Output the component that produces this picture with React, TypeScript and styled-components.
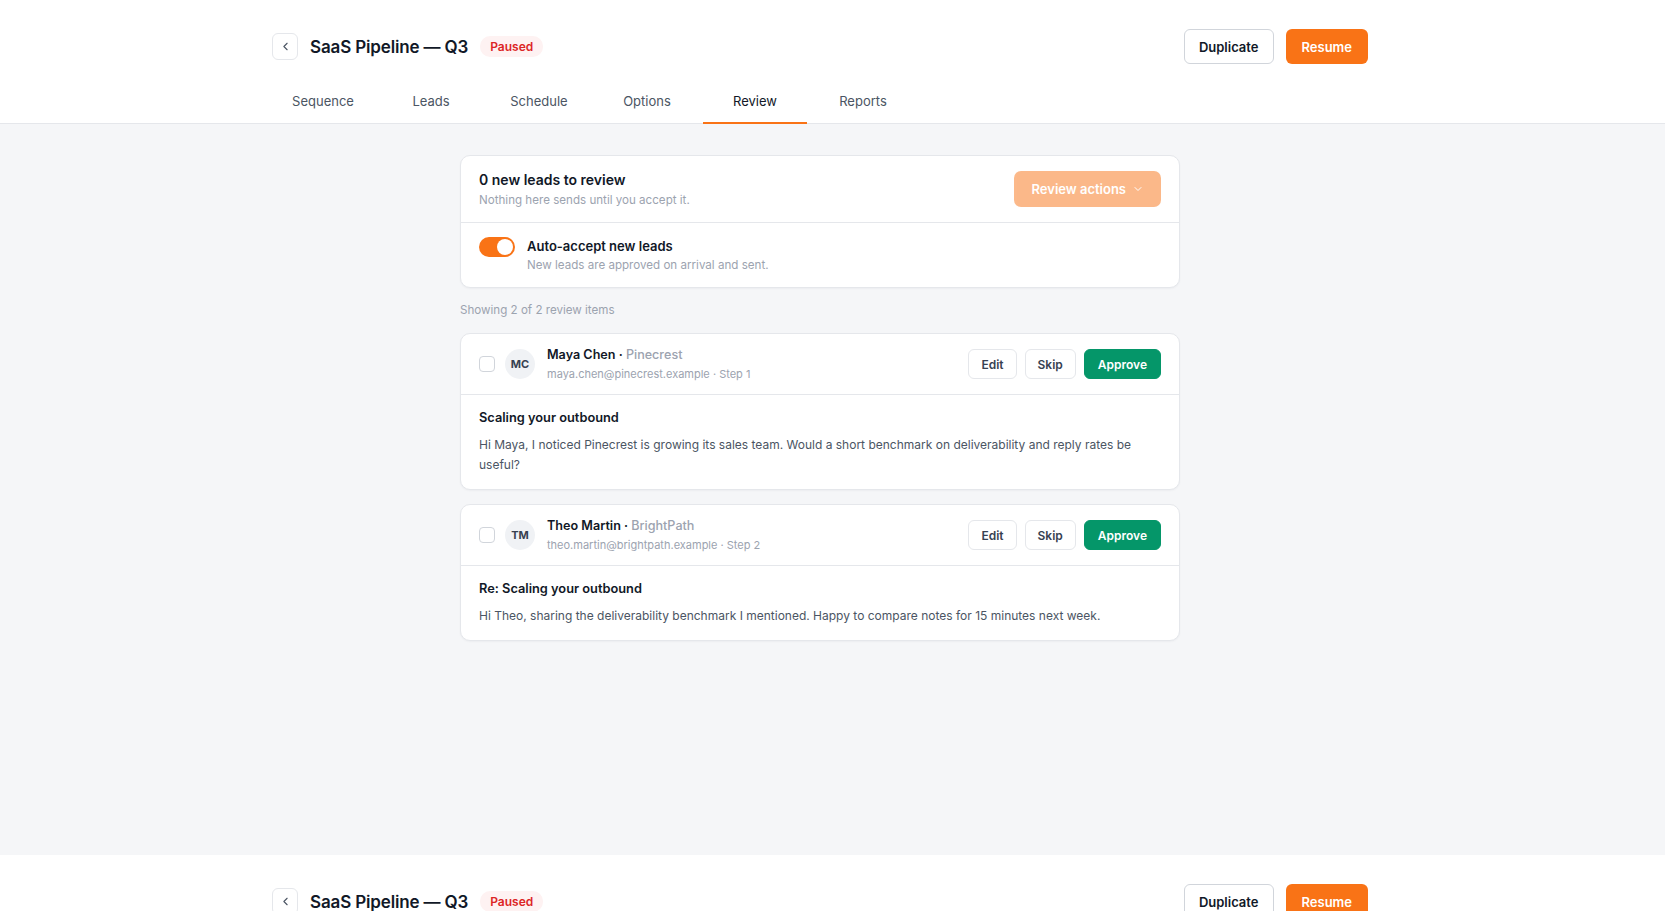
import React from "react"
import styled, { createGlobalStyle } from "styled-components"
import { ChevronLeft, ChevronDown } from "lucide-react"

const GlobalStyle = createGlobalStyle`
  * {
    box-sizing: border-box;
  }
  body {
    margin: 0;
    background: #ffffff;
    font-family: Inter, "Noto Sans", sans-serif;
    color: #111827;
    -webkit-font-smoothing: antialiased;
  }
`

type Item = {
  initials: string
  name: string
  company: string
  email: string
  step: number
  subject: string
  body: string
}

const items: Item[] = [
  {
    initials: "MC",
    name: "Maya Chen",
    company: "Pinecrest",
    email: "maya.chen@pinecrest.example",
    step: 1,
    subject: "Scaling your outbound",
    body: "Hi Maya, I noticed Pinecrest is growing its sales team. Would a short benchmark on deliverability and reply rates be useful?",
  },
  {
    initials: "TM",
    name: "Theo Martin",
    company: "BrightPath",
    email: "theo.martin@brightpath.example",
    step: 2,
    subject: "Re: Scaling your outbound",
    body: "Hi Theo, sharing the deliverability benchmark I mentioned. Happy to compare notes for 15 minutes next week.",
  },
]

const tabs = ["Sequence", "Leads", "Schedule", "Options", "Review", "Reports"]

const ReviewCard = ({ item }: { item: Item }) => (
  <Card>
    <LeadRow>
      <Checkbox />
      <Avatar>{item.initials}</Avatar>
      <LeadInfo>
        <LeadName>
          {item.name} · <Company>{item.company}</Company>
        </LeadName>
        <LeadMeta>
          {item.email} · Step {item.step}
        </LeadMeta>
      </LeadInfo>
      <RowActions>
        <SmallButton>Edit</SmallButton>
        <SmallButton>Skip</SmallButton>
        <SmallButton $approve>Approve</SmallButton>
      </RowActions>
    </LeadRow>
    <MessageBody>
      <Subject>{item.subject}</Subject>
      <BodyText>{item.body}</BodyText>
    </MessageBody>
  </Card>
)

const Screen = () => (
  <ScreenWrapper>
    <TopBar>
      <Inner>
        <HeaderRow>
          <TitleGroup>
            <BackButton>
              <ChevronLeft size={13} strokeWidth={2} />
            </BackButton>
            <Title>SaaS Pipeline — Q3</Title>
            <Badge>Paused</Badge>
          </TitleGroup>
          <HeaderActions>
            <OutlineButton>Duplicate</OutlineButton>
            <PrimaryButton>Resume</PrimaryButton>
          </HeaderActions>
        </HeaderRow>
        <TabBar>
          {tabs.map((t) => (
            <Tab key={t} $active={t === "Review"}>
              {t}
            </Tab>
          ))}
        </TabBar>
      </Inner>
    </TopBar>
    <Main>
      <Column>
        <Card>
          <SummaryRow>
            <div>
              <SummaryTitle>0 new leads to review</SummaryTitle>
              <Muted>Nothing here sends until you accept it.</Muted>
            </div>
            <ActionsButton disabled>
              Review actions
              <ChevronDown size={12} strokeWidth={2} />
            </ActionsButton>
          </SummaryRow>
          <ToggleRow>
            <Toggle $on />
            <div>
              <ToggleLabel>Auto-accept new leads</ToggleLabel>
              <Muted>New leads are approved on arrival and sent.</Muted>
            </div>
          </ToggleRow>
        </Card>
        <CountLine>Showing 2 of 2 review items</CountLine>
        <CardList>
          {items.map((item) => (
            <ReviewCard key={item.email} item={item} />
          ))}
        </CardList>
      </Column>
    </Main>
  </ScreenWrapper>
)

const App = () => (
  <>
    <GlobalStyle />
    <Screen />
    <Screen />
  </>
)

export default App

const ScreenWrapper = styled.div`
  display: flex;
  flex-direction: column;
  min-height: calc(100vh - 56px);
`
const TopBar = styled.header`
  background: #ffffff;
  border-bottom: 1px solid #e5e7eb;
  padding-right: 25px;
`
const Inner = styled.div`
  max-width: 1096px;
  margin: 0 auto;
`
const HeaderRow = styled.div`
  display: flex;
  align-items: center;
  justify-content: space-between;
  padding-top: 29px;
  height: 64px;
`
const TitleGroup = styled.div`
  display: flex;
  align-items: center;
  gap: 12px;
`
const BackButton = styled.button`
  display: grid;
  place-items: center;
  width: 26px;
  height: 27px;
  padding: 0;
  background: #ffffff;
  border: 1px solid #e5e7eb;
  border-radius: 6px;
  color: #4b5563;
`
const Title = styled.h1`
  margin: 0;
  font-size: 17px;
  font-weight: 600;
  line-height: 24px;
  letter-spacing: -0.15px;
  color: #111827;
`
const Badge = styled.span`
  display: inline-flex;
  align-items: center;
  height: 21px;
  padding: 0 10px;
  background: #fef2f2;
  border-radius: 10px;
  font-size: 12px;
  font-weight: 600;
  color: #dc2626;
`
const HeaderActions = styled.div`
  display: flex;
  gap: 12px;
`
const OutlineButton = styled.button`
  height: 35px;
  padding: 0 14px;
  background: #ffffff;
  border: 1px solid #d1d5db;
  border-radius: 6px;
  font-family: inherit;
  font-size: 13px;
  font-weight: 600;
  color: #111827;
`
const PrimaryButton = styled.button`
  height: 35px;
  padding: 0 16px;
  background: #f97316;
  border: none;
  border-radius: 6px;
  font-family: inherit;
  font-size: 13px;
  font-weight: 600;
  color: #ffffff;
`
const TabBar = styled.nav`
  display: flex;
  gap: 4px;
  margin-top: 15px;
  margin-left: -1px;
`
const Tab = styled.div<{ $active?: boolean }>`
  display: grid;
  place-items: center;
  width: 104px;
  height: 45px;
  margin-bottom: -1px;
  border-bottom: 2px solid ${(p) => (p.$active ? "#f97316" : "transparent")};
  font-size: 13px;
  color: ${(p) => (p.$active ? "#111827" : "#4b5563")};
`
const Main = styled.main`
  flex: 1;
  background: #f5f6f8;
  padding: 31px 25px 40px 0;
`
const Column = styled.div`
  width: 720px;
  margin: 0 auto;
`
const Card = styled.section`
  background: #ffffff;
  border: 1px solid #e5e7eb;
  border-radius: 10px;
  box-shadow: 0 1px 2px rgba(16, 24, 40, 0.04);
  overflow: hidden;
`
const SummaryRow = styled.div`
  display: flex;
  align-items: center;
  justify-content: space-between;
  padding: 14px 18px;
  border-bottom: 1px solid #e5e7eb;
`
const SummaryTitle = styled.div`
  font-size: 14px;
  font-weight: 600;
  line-height: 20px;
  color: #111827;
`
const Muted = styled.div`
  margin-top: 2px;
  font-size: 11.6px;
  line-height: 16px;
  color: #9ca3af;
`
const ActionsButton = styled.button`
  display: flex;
  align-items: center;
  gap: 6px;
  height: 36px;
  padding: 0 17px;
  background: #f97316;
  opacity: 0.5;
  border: none;
  border-radius: 7px;
  font-family: inherit;
  font-size: 13px;
  font-weight: 600;
  color: #ffffff;
`
const ToggleRow = styled.div`
  display: flex;
  align-items: flex-start;
  gap: 12px;
  padding: 14px 18px;
`
const Toggle = styled.span<{ $on?: boolean }>`
  position: relative;
  flex: none;
  width: 36px;
  height: 20px;
  border-radius: 10px;
  background: ${(p) => (p.$on ? "#f97316" : "#d1d5db")};

  &::after {
    content: "";
    position: absolute;
    top: 2px;
    left: ${(p) => (p.$on ? "18px" : "2px")};
    width: 16px;
    height: 16px;
    border-radius: 50%;
    background: #ffffff;
  }
`
const ToggleLabel = styled.div`
  font-size: 13px;
  font-weight: 600;
  line-height: 18px;
  color: #111827;
`
const CountLine = styled.div`
  margin: 14px 0 15px;
  font-size: 11.6px;
  line-height: 16px;
  color: #9ca3af;
`
const CardList = styled.div`
  display: flex;
  flex-direction: column;
  gap: 14px;
`
const LeadRow = styled.div`
  display: flex;
  align-items: center;
  padding: 12px 18px;
  border-bottom: 1px solid #e5e7eb;
`
const Checkbox = styled.span`
  flex: none;
  width: 16px;
  height: 16px;
  margin-right: 10px;
  border: 1px solid #d1d5db;
  border-radius: 4px;
  background: #ffffff;
`
const Avatar = styled.div`
  display: grid;
  flex: none;
  place-items: center;
  width: 30px;
  height: 30px;
  margin-right: 12px;
  border-radius: 50%;
  background: #f0f2f5;
  font-size: 11px;
  font-weight: 700;
  color: #374151;
`
const LeadInfo = styled.div`
  display: flex;
  flex: 1;
  flex-direction: column;
  gap: 2px;
`
const LeadName = styled.div`
  font-size: 12.6px;
  font-weight: 600;
  line-height: 18px;
  color: #111827;
`
const Company = styled.span`
  font-weight: 500;
  color: #9ca3af;
`
const LeadMeta = styled.div`
  font-size: 11px;
  line-height: 16px;
  color: #9ca3af;
`
const RowActions = styled.div`
  display: flex;
  gap: 8px;
`
const SmallButton = styled.button<{ $approve?: boolean }>`
  height: 30px;
  padding: 0 ${(p) => (p.$approve ? "13px" : "12px")};
  background: ${(p) => (p.$approve ? "#059669" : "#ffffff")};
  border: 1px solid ${(p) => (p.$approve ? "#059669" : "#e5e7eb")};
  border-radius: 6px;
  font-family: inherit;
  font-size: 12px;
  font-weight: 600;
  color: ${(p) => (p.$approve ? "#ffffff" : "#374151")};
`
const MessageBody = styled.div`
  padding: 13px 18px 14px;
`
const Subject = styled.div`
  font-size: 12.8px;
  font-weight: 600;
  line-height: 20px;
  color: #111827;
`
const BodyText = styled.p`
  margin: 7px 0 0;
  font-size: 12px;
  line-height: 20px;
  color: #4b5563;
`
